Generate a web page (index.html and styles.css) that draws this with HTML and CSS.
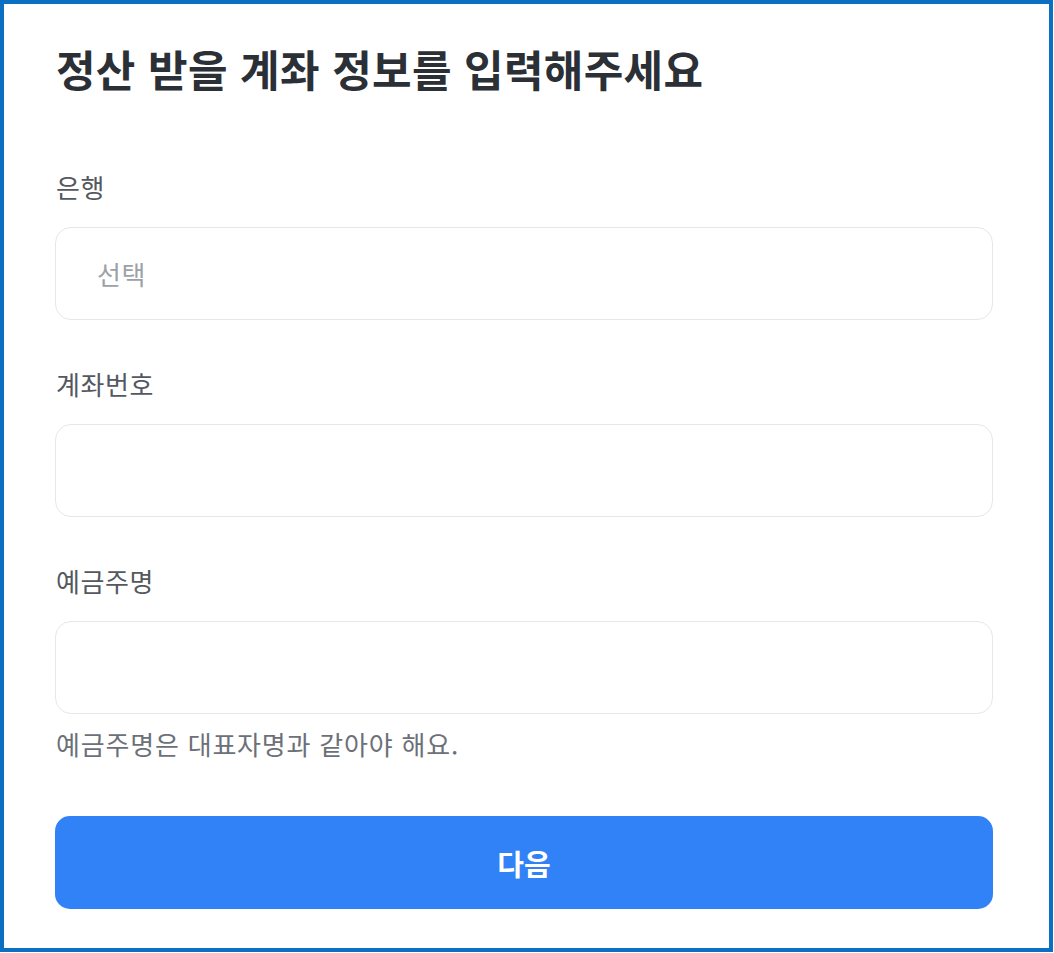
FILE: index.html
```html
<!DOCTYPE html>
<html lang="ko">
<head>
<meta charset="utf-8">
<title>정산 계좌 정보</title>
<link rel="stylesheet" href="styles.css">
</head>
<body>
<div class="frame">
  <h1 class="title">정산 받을 계좌 정보를 입력해주세요</h1>
  <div class="field first">
    <label class="label">은행</label>
    <div class="input"><span class="placeholder">선택</span></div>
  </div>
  <div class="field">
    <label class="label">계좌번호</label>
    <div class="input"></div>
  </div>
  <div class="field">
    <label class="label">예금주명</label>
    <div class="input"></div>
    <p class="help">예금주명은 대표자명과 같아야 해요.</p>
  </div>
  <button class="next">다음</button>
</div>
</body>
</html>
```
FILE: styles.css
```css
html, body {
  margin: 0;
  padding: 0;
  background: #ffffff;
}
body {
  font-family: "Noto Sans CJK KR", "Noto Sans", sans-serif;
}
.frame {
  box-sizing: border-box;
  width: 1053px;
  height: 952px;
  border: 4px solid #0b6fc2;
  padding: 36px 56px 0 51px;
  display: flex;
  flex-direction: column;
}
.title {
  margin: 0 0 0 1px;
  font-size: 43px;
  line-height: 56px;
  font-weight: 700;
  color: #2b2f36;
  letter-spacing: 0.3px;
}
.field {
  display: flex;
  flex-direction: column;
  margin-top: 47px;
}
.field.first {
  margin-top: 74px;
}
.label {
  font-size: 26px;
  line-height: 34px;
  color: #54585f;
  margin: 0 0 23px 1px;
  letter-spacing: 0.6px;
}
.input {
  box-sizing: border-box;
  height: 93px;
  border: 1px solid #e6e7e9;
  border-radius: 16px;
  display: flex;
  align-items: center;
  padding-left: 41px;
}
.placeholder {
  font-size: 26px;
  color: #9da1a7;
  letter-spacing: 0.6px;
}
.help {
  margin: 13px 0 0 1px;
  font-size: 26px;
  line-height: 34px;
  color: #6c7078;
  letter-spacing: 0.8px;
}
.next {
  margin-top: 55px;
  height: 93px;
  border: none;
  border-radius: 15px;
  background: #3182f6;
  color: #ffffff;
  font-family: inherit;
  font-size: 29px;
  font-weight: 700;
  padding: 0;
}
```
